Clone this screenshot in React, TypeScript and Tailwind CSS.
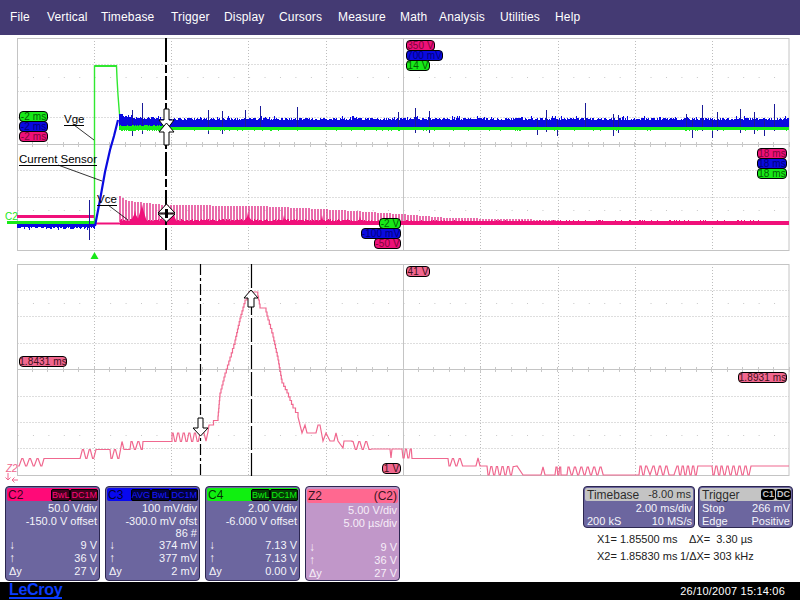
import React from "react";

let seed = 12345;
const rnd = () => {
  seed = (seed * 1103515245 + 12345) & 0x7fffffff;
  return seed / 0x7fffffff;
};

const lerpProfile = (x: number, p: number[][]) => {
  for (let i = 0; i < p.length - 1; i++) {
    if (x >= p[i][0] && x <= p[i + 1][0]) {
      return p[i][1] + ((x - p[i][0]) / (p[i + 1][0] - p[i][0])) * (p[i + 1][1] - p[i][1]);
    }
  }
  return p[p.length - 1][1];
};

// ---- upper traces
let bluePath = "";
let greenPath = "";
for (let x = 119; x < 789; x++) {
  const t = x < 135 ? 116 + (x - 119) * 0.2 : x < 165 ? 119.5 : 120.5;
  const top = t - rnd() * 3 + (rnd() < 0.1 ? -2 : 0);
  bluePath += `M${x}.5 ${top.toFixed(0)}V127.5`;
  const gt = x < 165 ? 125 + rnd() : 127;
  const gb = x < 165 ? 131 - rnd() : 130 + (rnd() < 0.08 ? 1 : 0);
  greenPath += `M${x}.5 ${gt.toFixed(0)}V${gb.toFixed(0)}`;
}
let blueLeft = "";
for (let x = 17; x < 95; x++) {
  blueLeft += `M${x}.5 223V${(226.5 + rnd() * 2.5 + (rnd() < 0.12 ? 2 : 0)).toFixed(0)}`;
}
const spikes: number[][] = [
  [89, 200, 240],
  [142, 103, 134],
  [260, 106, 130],
  [297, 107, 130],
  [245, 110, 130],
  [208, 110, 134],
  [222, 111, 134],
  [132, 110, 136],
  [398, 112, 131],
  [415, 108, 133],
  [429, 111, 133],
  [546, 110, 132],
  [537, 120, 135],
  [557, 120, 136],
  [585, 103, 130],
  [613, 114, 136],
  [618, 115, 133],
  [686, 114, 131],
  [692, 120, 138],
  [702, 105, 131],
  [712, 120, 138],
  [717, 112, 131],
  [740, 109, 133],
  [754, 112, 134],
  [764, 120, 136],
  [774, 104, 131],
];
const spikePath = spikes.map(([x, a, b]) => `M${x}.5 ${a}V${b}`).join("");

const combTop = [
  [120, 196],
  [128, 201],
  [165, 205],
  [260, 206],
  [300, 208],
  [340, 210],
  [400, 214],
  [450, 218],
  [560, 220],
  [790, 220],
];
let comb = "";
for (let x = 120; x < 560; x += 3) {
  comb += `M${x} ${lerpProfile(x, combTop).toFixed(0)}V222`;
}
let magBand = "";
for (let x = 120; x < 789; x++) {
  const amp = x < 350 ? 1.2 : 0.6;
  magBand += `M${x}.5 ${(221 - rnd() * amp - (x < 400 && rnd() < 0.25 ? 1 : 0)).toFixed(0)}V${(224.5 + rnd() * 0.8).toFixed(0)}`;
}
const bumps = [
  [135, 210],
  [142, 204],
  [172, 209],
  [248, 212],
  [284, 215],
  [322, 215],
  [360, 216],
];
const bumpPoly = bumps
  .map(([x, y]) => `M${x - 5} 222L${x - 1} ${y + 5}L${x} ${y}L${x + 1} ${y + 5}L${x + 5} 222Z`)
  .join("");

// ---- lower trace
const zig = (x1: number, x2: number, a: number, b: number, w = 4.6) => {
  const out: number[][] = [];
  let x = x1;
  let onA = true;
  while (x < x2) {
    out.push([x, onA ? a : b]);
    x += 1.1;
    out.push([x, onA ? a : b]);
    x += w - 1.1 - 1.2;
    onA = !onA;
  }
  return out;
};
const stairs = (pts: number[][]) => {
  const out: number[][] = [];
  for (let i = 0; i < pts.length - 1; i++) {
    const [x0, y0] = pts[i];
    const [x1, y1] = pts[i + 1];
    const n = Math.max(1, Math.round(Math.abs(y1 - y0) / 4));
    for (let k = 0; k < n; k++) {
      const xa = x0 + ((x1 - x0) * k) / n;
      const xb = x0 + ((x1 - x0) * (k + 1)) / n;
      const ya = y0 + ((y1 - y0) * k) / n;
      const yb = y0 + ((y1 - y0) * (k + 1)) / n;
      out.push([xa, ya], [xb, ya], [xb, yb]);
    }
  }
  return out;
};
const lowerPts: number[][] = [
  ...zig(18, 44, 466, 458.5, 5),
  [44, 458.5],
  [78, 458.5],
  ...zig(79, 98, 458.5, 449.5),
  [98, 449.5],
  [110, 449.5],
  ...zig(111, 120, 458.5, 449.5),
  [122, 441.5],
  [124, 449.5],
  [130, 449.5],
  ...zig(131, 143, 441.5, 449.5),
  [143, 441.5],
  [172, 441.5],
  ...zig(172, 200, 433, 441.5, 4),
  [200, 433],
  [204, 433],
  [206, 441],
  [208, 432],
  ...stairs([
    [209, 425],
    [218, 416],
    [220, 393],
    [225, 373],
    [230, 357],
    [235, 340],
    [240, 318],
    [245, 300],
    [249, 292],
    [257, 292],
    [260, 308],
    [265, 308],
    [268, 320],
    [273, 337],
    [278, 360],
    [282, 383],
    [287, 393],
    [293, 408],
    [298, 417],
  ]),
  [302, 433],
  [305, 425],
  [307, 433],
  [313, 433],
  [316, 433],
  [318, 425],
  [320, 425],
  [323, 441],
  [326, 433],
  [330, 441],
  [334, 441],
  [336, 433],
  [338, 441],
  [343, 448],
  [344, 441],
  [352, 441],
  ...zig(352, 372, 441.5, 449.5),
  [372, 449],
  [390, 449],
  [391, 458],
  [392, 449],
  [402, 449],
  ...zig(403, 412, 458, 449, 3.6),
  [412, 458.5],
  [448, 458.5],
  ...zig(449, 463, 466, 458.5),
  [463, 466],
  [476, 466],
  [478, 458],
  [480, 466],
  [487, 466],
  ...zig(488, 516, 475, 466.5, 4),
  [517, 466],
  [523, 475],
  [541, 475],
  [543, 467],
  [545, 475],
  [555, 475],
  ...zig(556, 560, 467, 475, 3),
  [561, 475],
  [567, 475],
  ...zig(568, 606, 467, 475, 4.4),
  [606, 475],
  [639, 475],
  ...zig(640, 648, 466, 475, 4),
  [650, 475],
  ...zig(653, 670, 466, 475, 4.4),
  [674, 475],
  ...zig(677, 700, 466, 475, 3.8),
  [703, 466],
  [712, 466],
  ...zig(713, 720, 475, 466, 4),
  ...zig(721, 752, 466, 475, 4.2),
  [753, 466],
  [789, 466],
];
const lowerStr = lowerPts.map((p) => `${p[0].toFixed(1)},${p[1].toFixed(1)}`).join(" ");

const vX = [94.5, 171.5, 248.5, 326.5, 480.5, 558.5, 635.5, 712.5];
const ticksX = Array.from({ length: 51 }, (_, i) => Math.floor(17 + i * 15.44) + 0.5);
const snap = (v: number) => Math.floor(v) + 0.5;

function Grid({ top, pitch }: { top: number; pitch: number }) {
  const h = pitch * 8;
  const cy = snap(top + pitch * 4);
  const rows = [1, 2, 3, 5, 6, 7].map((k) => snap(top + pitch * k));
  const dotRows = [snap(top + pitch * 1.5), snap(top + pitch * 6.5)];
  return (
    <g>
      {vX.map((x) => (
        <line key={x} x1={x} x2={x} y1={top} y2={top + h} stroke="#bdbdbd" strokeDasharray="1 2" />
      ))}
      {rows.map((y) => (
        <line key={y} x1={17.5} x2={789} y1={y} y2={y} stroke="#bdbdbd" strokeDasharray="1 2" />
      ))}
      {dotRows.map((y) => (
        <line key={y} x1={17.5} x2={789} y1={y} y2={y} stroke="#c8c8c8" strokeDasharray="1 14.44" />
      ))}
      <line x1={17.5} x2={789} y1={cy} y2={cy} stroke="#c4c4c4" />
      <line x1={403.5} x2={403.5} y1={top} y2={top + h} stroke="#c4c4c4" />
      {ticksX.map((x) => (
        <line key={x} x1={x} x2={x} y1={cy - 2.5} y2={cy + 2.5} stroke="#c8c8c8" />
      ))}
      <rect x={17.5} y={snap(top)} width={771.5} height={Math.round(h)} fill="none" stroke="#c4c4c4" />
    </g>
  );
}

type Tone = "g" | "b" | "m" | "p";
function Badge({ x, y, w, tone, children }: { x: number; y: number; w: number; tone: Tone; children: React.ReactNode }) {
  const cls =
    tone === "g"
      ? "bg-[#18e818] text-[#035c03]"
      : tone === "b"
        ? "bg-[#0a0ae0] text-[#00007a]"
        : tone === "m"
          ? "bg-[#ee1078] text-[#7a0638]"
          : "bg-[#f2688f] text-[#40101c]";
  return (
    <div
      style={{ left: x, top: y, width: w }}
      className={`absolute h-[11px] rounded-[4px] border border-black flex items-center justify-center text-[10px] tracking-[0.1px] leading-[9px] whitespace-nowrap ${cls}`}
    >
      {children}
    </div>
  );
}

function Note({ x, y, children }: { x: number; y: number; children: React.ReactNode }) {
  return (
    <div
      style={{ left: x, top: y }}
      className="absolute text-[11.5px] leading-[12px] text-black border-b border-black whitespace-nowrap"
    >
      {children}
    </div>
  );
}

function Row({ l, r, h = "h-[13px]" }: { l?: string; r?: string; h?: string }) {
  const isArrow = l === "↓" || l === "↑";
  return (
    <div className={`flex justify-between items-center pl-[2px] pr-[1px] ${h}`}>
      <span className={isArrow ? "text-[12px] leading-[12px]" : "leading-[12px]"}>{l}</span>
      <span className="leading-[12px]">{r}</span>
    </div>
  );
}

function Chip({ children, tone }: { children: React.ReactNode; tone: string }) {
  return (
    <span className={`h-[12px] rounded-[2px] bg-black/75 border border-black text-[9px] leading-[10px] ${tone}`}>
      {children}
    </span>
  );
}

function ChannelPanel({
  name,
  head,
  chipTone,
  chips,
  l1,
  l2,
  l3,
  v,
}: {
  name: string;
  head: string;
  chipTone: string;
  chips: string[];
  l1: string;
  l2: string;
  l3?: string;
  v: string[];
}) {
  return (
    <div className="w-[95px] h-[95px] rounded-[4px] border border-[#2c2750] bg-[#6c669f] text-[#f4f4fa] text-[11px] p-[1px]">
      <div className={`h-[13px] rounded-[2px] flex items-center justify-between pl-[1px] ${head}`}>
        <span className="text-[12px] leading-none text-black/80">{name}</span>
        <span className="flex">
          {chips.map((c) => (
            <Chip key={c} tone={chipTone}>
              {c}
            </Chip>
          ))}
        </span>
      </div>
      <Row r={l1} />
      <Row r={l2} />
      <Row r={l3} h="h-[11px]" />
      <Row l="↓" r={v[0]} />
      <Row l="↑" r={v[1]} />
      <Row l="Δy" r={v[2]} />
    </div>
  );
}

function ZoomPanel() {
  return (
    <div className="w-[95px] h-[95px] rounded-[4px] border border-[#2c2750] bg-[#c197c9] text-[#f6eef8] text-[11px] pt-[2px] px-[1px]">
      <div className="h-[14px] rounded-[2px] bg-[#ff6890] flex items-center justify-between px-[1px] text-[12px] text-black/80">
        <span>Z2</span>
        <span>(C2)</span>
      </div>
      <Row r="5.00 V/div" />
      <Row r="5.00 µs/div" />
      <Row h="h-[11px]" />
      <Row l="↓" r="9 V" />
      <Row l="↑" r="36 V" />
      <Row l="Δy" r="27 V" />
    </div>
  );
}

const menu: [string, string][] = [
  ["File", "w-[37px]"],
  ["Vertical", "w-[54px]"],
  ["Timebase", "w-[70px]"],
  ["Trigger", "w-[53px]"],
  ["Display", "w-[55px]"],
  ["Cursors", "w-[59px]"],
  ["Measure", "w-[62px]"],
  ["Math", "w-[39px]"],
  ["Analysis", "w-[61px]"],
  ["Utilities", "w-[55px]"],
  ["Help", "w-[30px]"],
];

const ARROW_STROKE = { fill: "#fff", stroke: "#000", strokeWidth: 1 };

export default function App() {
  return (
    <div className="w-[800px] h-[600px] bg-white overflow-hidden flex flex-col font-['Liberation_Sans',Arial,sans-serif]">
      <div className="h-[35px] bg-[#443a73] flex items-center pl-[10px] text-[12px] tracking-[0.15px] text-white shrink-0 pb-[1px]">
        {menu.map(([m, w]) => (
          <span key={m} className={w}>
            {m}
          </span>
        ))}
      </div>

      {/* upper grid */}
      <div className="relative h-[213px] mt-[3px] shrink-0">
        <svg className="absolute inset-0 overflow-visible" width={800} height={213} viewBox="0 38 800 213">
          <Grid top={38} pitch={26.5} />
          <path d={comb} stroke="#e02f88" strokeWidth={1.4} />
          <path d={bumpPoly} fill="#f0107a" />
          <path d={magBand} stroke="#f0107a" shapeRendering="crispEdges" />
          <line x1={17} x2={94} y1={216.5} y2={216.5} stroke="#f0107a" strokeWidth={3} />
          <path d={blueLeft} stroke="#0a0ae0" shapeRendering="crispEdges" />
          <line x1={7} x2={95} y1={222.5} y2={222.5} stroke="#18e818" strokeWidth={3} />
          <line x1={95} x2={120} y1={223.5} y2={223.5} stroke="#f0107a" strokeWidth={2} />
          <polyline
            points="94.5,224 94.5,66 116.5,66 117,78 118,95 119,108 120,120"
            fill="none"
            stroke="#30e830"
            strokeWidth={1.4}
          />
          <line x1={95} x2={117} y1={66} y2={66} stroke="#30e830" strokeWidth={2} />
          <path d={bluePath} stroke="#0a0ae0" shapeRendering="crispEdges" />
          <path d={spikePath} stroke="#1a1a98" shapeRendering="crispEdges" />
          <path d={greenPath} stroke="#18ee18" shapeRendering="crispEdges" />
          <polyline
            points="95,226 100,200 105,172 110,150 114,136 118,120"
            fill="none"
            stroke="#0a0ae0"
            strokeWidth={2.2}
          />
          <line x1={74} y1={125} x2={94} y2={140} stroke="#000" strokeWidth={0.8} />
          <line x1={58} y1={165} x2={102} y2={181} stroke="#000" strokeWidth={0.8} />
          <line x1={108} y1={205} x2={128} y2={220} stroke="#000" strokeWidth={0.8} />
          <line x1={166} x2={166} y1={38} y2={250} stroke="#000" strokeWidth={2} strokeDasharray="24 3 8 3" />
          <polygon points="164,109 169,109 169,120 174,120 166.5,130 159,120 164,120" {...ARROW_STROKE} />
          <polygon points="166.5,123 174,132 169,132 169,145 164,145 164,132 159,132" {...ARROW_STROKE} />
          <polygon points="166.5,204 175,213 158,213" {...ARROW_STROKE} />
          <polygon points="166.5,222 175,214 158,214" {...ARROW_STROKE} />
          <rect x={165} y={209} width={3} height={9} fill="#000" />
          <polygon points="90.5,259 98.5,259 94.5,252" fill="#18e818" />
        </svg>
        <span className="absolute left-[5px] top-[174px] text-[10px] leading-none text-[#18e818]">C2</span>
        <Note x={64} y={75}>
          Vge
        </Note>
        <Note x={19} y={115}>
          Current Sensor
        </Note>
        <Note x={97} y={155}>
          Vce
        </Note>
        <Badge x={19} y={73} w={29} tone="g">
          -2 ms
        </Badge>
        <Badge x={19} y={83} w={29} tone="b">
          -2 ms
        </Badge>
        <Badge x={19} y={93} w={29} tone="m">
          -2 ms
        </Badge>
        <Badge x={406} y={2} w={29} tone="m">
          350 V
        </Badge>
        <Badge x={406} y={12} w={37} tone="b">
          700 mV
        </Badge>
        <Badge x={406} y={22} w={24} tone="g">
          14 V
        </Badge>
        <Badge x={757} y={110} w={30} tone="m">
          18 ms
        </Badge>
        <Badge x={757} y={120} w={30} tone="b">
          18 ms
        </Badge>
        <Badge x={757} y={130} w={30} tone="g">
          18 ms
        </Badge>
        <Badge x={379} y={180} w={22} tone="g">
          -2 V
        </Badge>
        <Badge x={361} y={190} w={40} tone="b">
          -100 mV
        </Badge>
        <Badge x={374} y={200} w={27} tone="m">
          -50 V
        </Badge>
      </div>

      {/* lower grid */}
      <div className="relative h-[213px] mt-[13px] shrink-0">
        <svg className="absolute inset-0 overflow-visible" width={800} height={213} viewBox="0 264 800 213">
          <Grid top={264} pitch={26.4} />
          <polyline points={lowerStr} fill="none" stroke="#f0688f" strokeWidth={1.2} />
          <line x1={200.5} x2={200.5} y1={264} y2={476} stroke="#000" strokeWidth={1.2} strokeDasharray="11 3 3 3" />
          <line x1={251.5} x2={251.5} y1={264} y2={476} stroke="#000" strokeWidth={1.2} strokeDasharray="24 3" />
          <polygon points="198,418 203,418 203,428 208,428 200.5,436 193,428 198,428" {...ARROW_STROKE} />
          <polygon points="251,290 258,298 254,298 254,307 248,307 248,298 244,298" {...ARROW_STROKE} />
          <path
            d="M8 473V480M5.5 477.5L8 480L10.5 477.5M18 480H12M14.5 477.5L12 480L14.5 482.5"
            stroke="#f0688f"
            fill="none"
            strokeWidth={1}
          />
        </svg>
        <span className="absolute left-[6px] top-[200px] text-[10px] leading-none italic text-[#f0688f]">Z2</span>
        <Badge x={406} y={2} w={24} tone="p">
          41 V
        </Badge>
        <Badge x={19} y={92} w={48} tone="p">
          1.8431 ms
        </Badge>
        <Badge x={738} y={108} w={49} tone="p">
          1.8931 ms
        </Badge>
        <Badge x={382} y={199} w={19} tone="p">
          1 V
        </Badge>
      </div>

      {/* panels */}
      <div className="h-[95px] mt-[9px] shrink-0 flex pl-[5px]">
        <div className="flex gap-[5px]">
          <ChannelPanel
            name="C2"
            head="bg-[#ff0a78]"
            chipTone="text-[#ff0a78]"
            chips={["BwL", "DC1M"]}
            l1="50.0 V/div"
            l2="-150.0 V offset"
            v={["9 V", "36 V", "27 V"]}
          />
          <ChannelPanel
            name="C3"
            head="bg-[#0808f0]"
            chipTone="text-[#1818ff]"
            chips={["AVG", "BwL", "DC1M"]}
            l1="100 mV/div"
            l2="-300.0 mV ofst"
            l3="86 #"
            v={["374 mV", "377 mV", "2 mV"]}
          />
          <ChannelPanel
            name="C4"
            head="bg-[#10f010]"
            chipTone="text-[#10f010]"
            chips={["BwL", "DC1M"]}
            l1="2.00 V/div"
            l2="-6.000 V offset"
            v={["7.13 V", "7.13 V", "0.00 V"]}
          />
          <ZoomPanel />
        </div>
        <div className="ml-[183px] w-[210px]">
          <div className="flex gap-[3px]">
            <div className="w-[112px] h-[42px] rounded-[4px] border border-[#2c2750] bg-[#6c669f] text-[#f4f4fa] text-[11px] p-[1px]">
              <div className="h-[13px] bg-[#c4c4c4] rounded-[2px] text-black/80 flex justify-between items-center px-[2px]">
                <span className="text-[12px]">Timebase</span>
                <span>-8.00 ms</span>
              </div>
              <Row r="2.00 ms/div" h="h-[13px]" />
              <Row l="200 kS" r="10 MS/s" h="h-[13px]" />
            </div>
            <div className="w-[95px] h-[42px] rounded-[4px] border border-[#2c2750] bg-[#6c669f] text-[#f4f4fa] text-[11px] p-[1px]">
              <div className="h-[13px] bg-[#c4c4c4] rounded-[2px] text-black/80 flex justify-between items-center pl-[2px]">
                <span className="text-[12px]">Trigger</span>
                <span className="flex gap-[1px] text-[9px] font-bold">
                  <span className="bg-black text-[#c4c4c4] rounded-[3px] px-[1px] leading-[11px]">C1</span>
                  <span className="bg-black text-[#c4c4c4] rounded-[3px] px-[1px] leading-[11px]">DC</span>
                </span>
              </div>
              <Row l="Stop" r="266 mV" h="h-[13px]" />
              <Row l="Edge" r="Positive" h="h-[13px]" />
            </div>
          </div>
          <div className="mt-[3px] ml-[14px] text-[11px] leading-[17px] text-[#202020] whitespace-pre">
            <div className="flex">
              <span className="w-[92px]">X1= 1.85500 ms</span>
              <span>ΔX=  3.30 µs</span>
            </div>
            <div className="flex">
              <span className="w-[83px]">X2= 1.85830 ms</span>
              <span>1/ΔX= 303 kHz</span>
            </div>
          </div>
        </div>
      </div>

      {/* footer */}
      <div className="h-[18px] mt-[1px] bg-black flex items-center justify-between shrink-0 pl-[9px] pr-[15px]">
        <span className="text-[16px] tracking-[-0.3px] leading-[14px] font-bold text-[#0a3cff] border-b-2 border-[#0a3cff]">LeCroy</span>
        <span className="text-[11px] tracking-[0.2px] text-white">26/10/2007 15:14:06</span>
      </div>
    </div>
  );
}
